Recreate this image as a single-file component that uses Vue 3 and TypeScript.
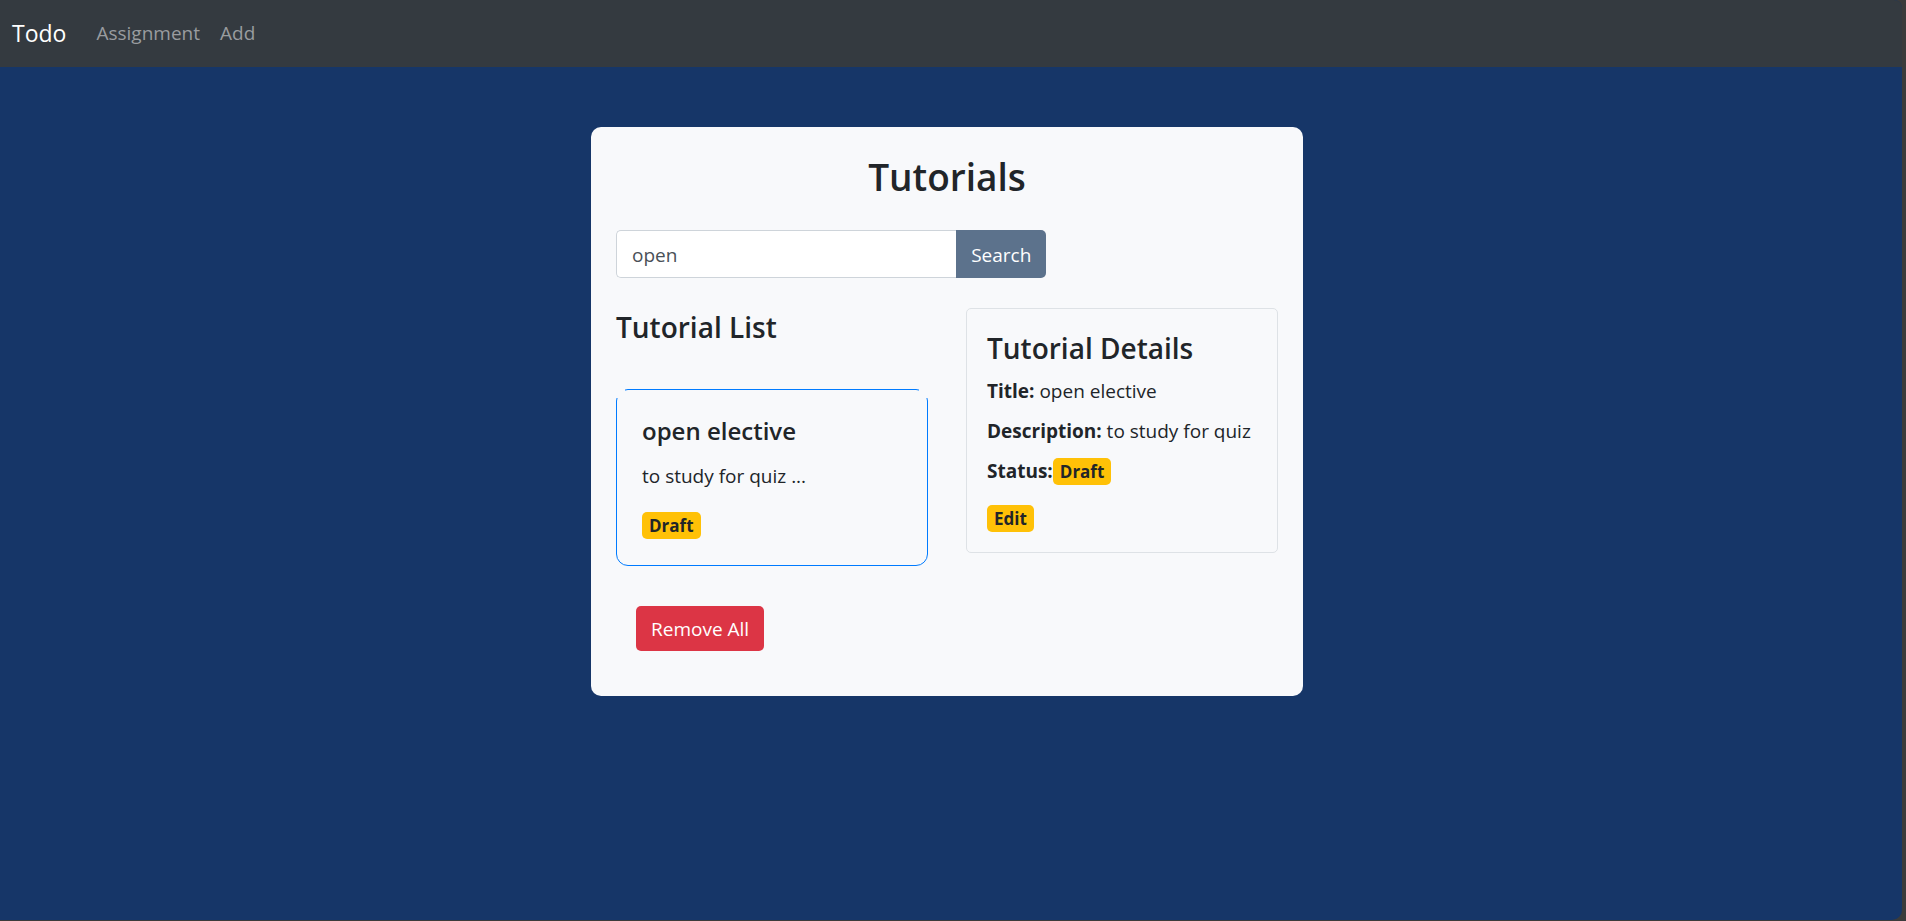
<script setup lang="ts">
import { computed, ref } from 'vue'

interface Tutorial {
  id: number
  title: string
  description: string
  published: boolean
}

const query = ref<string>('open')
const tutorials = ref<Tutorial[]>([
  { id: 1, title: 'open elective', description: 'to study for quiz', published: false },
])
const activeId = ref<number>(1)
const active = computed(() => tutorials.value.find((t) => t.id === activeId.value))

const statusOf = (t: Tutorial): string => (t.published ? 'Published' : 'Draft')
const removeAll = (): void => {
  tutorials.value = []
}
</script>

<template>
  <div class="frame">
    <div class="app">
      <nav class="navbar">
        <a class="brand" href="#">Todo</a>
        <a class="nav-link" href="#assignment">Assignment</a>
        <a class="nav-link" href="#add">Add</a>
      </nav>

      <main class="content">
        <section class="panel">
          <h1>Tutorials</h1>

          <form class="search" @submit.prevent>
            <input v-model="query" type="text" aria-label="Search by title" />
            <button type="submit">Search</button>
          </form>

          <div class="columns">
            <div class="list-column">
              <h2>Tutorial List</h2>
              <ul class="list">
                <li v-for="t in tutorials" :key="t.id" class="item" @click="activeId = t.id">
                  <h3>{{ t.title }}</h3>
                  <p>{{ t.description }} ...</p>
                  <span class="badge">{{ statusOf(t) }}</span>
                </li>
              </ul>
              <button class="remove" type="button" @click="removeAll">Remove All</button>
            </div>

            <article v-if="active" class="details">
              <h2>Tutorial Details</h2>
              <p><strong>Title:</strong> {{ active.title }}</p>
              <p><strong>Description:</strong> {{ active.description }}</p>
              <p class="status">
                <strong>Status:</strong><span class="badge">{{ statusOf(active) }}</span>
              </p>
              <a class="badge" href="#edit">Edit</a>
            </article>
          </div>
        </section>
      </main>
    </div>
  </div>
</template>

<style>
body {
  margin: 0;
  background: #3b3b3b;
}
</style>

<style scoped>
.frame {
  box-sizing: border-box;
  min-height: 100vh;
  padding: 0 4px 1px 0;
  display: flex;
  background: #3b3b3b;
  color: #212529;
  font-family: 'Segoe UI', 'Open Sans', 'Noto Sans', sans-serif;
  font-size: 19px;
  line-height: 30px;
}

.app {
  flex: 1;
  overflow: hidden;
  border-radius: 0 8px 10px 0;
  background: #163668;
}

.navbar {
  box-sizing: border-box;
  display: flex;
  align-items: center;
  height: 67px;
  padding: 0 12px 2px;
  background: #343a40;
}

.brand {
  margin-right: 20px;
  color: #fff;
  font-size: 23px;
  text-decoration: none;
}

.nav-link {
  padding: 0 10px;
  color: #999c9f;
  text-decoration: none;
}

.content {
  display: flex;
  justify-content: center;
  padding: 60px 8px 0 0;
}

.panel {
  box-sizing: border-box;
  width: 100%;
  max-width: 712px;
  padding: 25px 25px 45px;
  border-radius: 10px;
  background: #f8f9fb;
}

h1,
h2,
h3,
p {
  margin: 0;
}

h1,
h2,
h3 {
  font-weight: 600;
}

h1 {
  margin-bottom: 28px;
  font-size: 37px;
  line-height: 50px;
  text-align: center;
}

h2 {
  font-size: 28px;
  line-height: 38px;
}

.search {
  display: flex;
  width: 65%;
  margin-bottom: 30px;
}

.search input,
.search button {
  box-sizing: border-box;
  height: 48px;
  font: inherit;
}

.search input {
  flex: 1;
  min-width: 0;
  padding: 2px 15px 0;
  border: 1px solid #ced4da;
  border-right: 0;
  border-radius: 5px 0 0 5px;
  background: #fff;
  color: #495057;
  outline: 0;
}

.search button {
  padding: 2px 15px 0;
  border: 0;
  border-radius: 0 5px 5px 0;
  background: #5c728c;
  color: #fff;
}

.columns {
  display: grid;
  grid-template-columns: 1fr 1fr;
  align-items: start;
  column-gap: 38px;
}

.list {
  margin: 43px 0 40px;
  padding: 0;
  list-style: none;
}

.item {
  position: relative;
  padding: 25px 25px 26px;
  border: 1px solid #007bff;
  border-radius: 12px;
}

.item::before,
.item::after {
  content: '';
  position: absolute;
  top: -1px;
  width: 9px;
  height: 9px;
  background: #f8f9fb;
}

.item::before {
  left: -1px;
}

.item::after {
  right: -1px;
}

.item h3 {
  margin-bottom: 14px;
  font-size: 24px;
  line-height: 32px;
}

.item p {
  margin-bottom: 21px;
}

.badge {
  display: block;
  box-sizing: border-box;
  width: fit-content;
  height: 27px;
  padding: 0 7px;
  border-radius: 5px;
  background: #ffc107;
  color: #212529;
  font-size: 17px;
  font-weight: 700;
  line-height: 28px;
  text-decoration: none;
}

.remove {
  display: block;
  height: 45px;
  margin-left: 20px;
  padding: 0 15px;
  border: 0;
  border-radius: 5px;
  background: #dc3545;
  color: #fff;
  font: inherit;
}

.details {
  padding: 20px;
  border: 1px solid #dee2e6;
  border-radius: 5px;
}

.details h2 {
  margin-bottom: 9px;
}

.details p {
  margin-bottom: 10px;
}

.details .status {
  display: flex;
  align-items: center;
  margin-bottom: 19px;
}
</style>
